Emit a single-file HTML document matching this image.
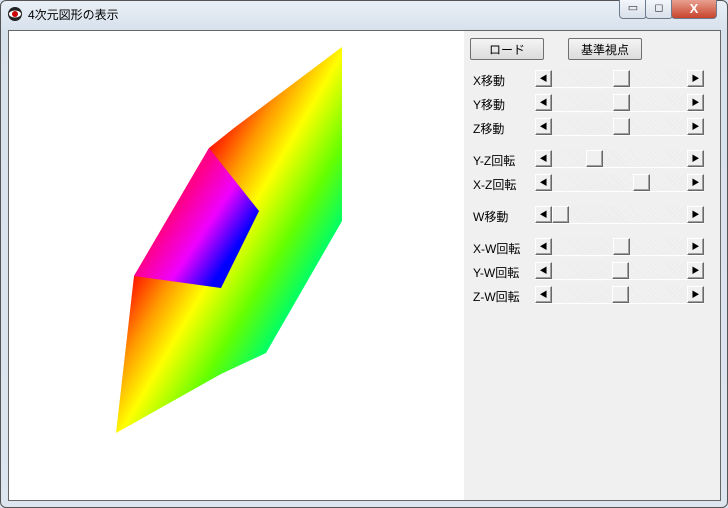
<!DOCTYPE html><html><head><meta charset="utf-8"><style>
body{margin:0;width:728px;height:508px;overflow:hidden;background:#dbe4ef;font-family:"Liberation Sans","Noto Sans CJK JP",sans-serif;position:relative}
.frame{position:absolute;left:0;top:0;width:726px;height:506px;border:1px solid #555;border-radius:6px;background:linear-gradient(#e9eff6,#d7e1ec 30px,#dde5ef)}
.title{position:absolute;left:28px;top:6px;font-size:12px;color:#000}
.client{position:absolute;left:8px;top:30px;width:711px;height:469px;border:1px solid #666;background:#f0f0f0}
.canvas{position:absolute;left:0;top:0;width:455px;height:469px;background:#fff}
.btn{position:absolute;top:7px;height:22px;width:74px;border:1px solid #707070;background:linear-gradient(#f4f4f4,#dcdcdc);font-size:12px;text-align:center;line-height:22px;box-sizing:border-box;border-radius:2px}
.lbl{position:absolute;left:464px;font-size:12px}
.sb{position:absolute;left:526px;width:169px;height:17px;background:repeating-linear-gradient(45deg,#f5f5f5 0 1px,#e9e9e9 1px 2px);border-bottom:1px solid #fff}
.sb .a,.sb .t{position:absolute;top:0;width:15px;height:15px;background:#f0f0f0;border:1px solid;border-color:#fff #696969 #696969 #fff;box-shadow:inset -1px -1px #a0a0a0}
.sb .a{font-size:8px;line-height:15px;text-align:center}
.wb{position:absolute;top:0;height:18px;border:1px solid #6b7a8e;border-top:none;border-radius:0 0 4px 4px;background:linear-gradient(#f3f6fa,#d8e0ea);font-size:11px;text-align:center;line-height:17px;color:#333}
</style></head><body>
<div class="frame"></div>
<svg style="position:absolute;left:7px;top:6px" width="16" height="16"><circle cx="8" cy="8" r="7" fill="#222"/><ellipse cx="8" cy="8" rx="6" ry="3.5" fill="#fff"/><circle cx="8" cy="8" r="3" fill="#c00"/></svg>
<div class="title">4次元図形の表示</div>
<div class="wb" style="left:619px;width:26px">▭</div>
<div class="wb" style="left:645px;width:26px">◻</div>
<div class="wb" style="left:671px;width:44px;background:linear-gradient(#e8a090,#c8442c);color:#fff;font-weight:bold;font-size:13px">X</div>
<div class="client">
<div class="canvas"><svg width="455" height="469" style="position:absolute;left:-8px;top:-30px">
<defs>
<linearGradient id="g" x1="168" y1="204" x2="305" y2="284" gradientUnits="userSpaceOnUse"><stop offset="0" stop-color="#f00"/><stop offset=".25" stop-color="#f90"/><stop offset=".46" stop-color="#ff0"/><stop offset=".75" stop-color="#6f0"/><stop offset="1" stop-color="#0f6"/></linearGradient>
<linearGradient id="g4" x1="180" y1="200" x2="240" y2="240" gradientUnits="userSpaceOnUse"><stop offset="0" stop-color="#f08"/><stop offset=".5" stop-color="#e0f"/><stop offset="1" stop-color="#00f"/></linearGradient>
<pattern id="dots" width="4" height="4" patternUnits="userSpaceOnUse"><rect width="1" height="1" fill="#fff" opacity=".5"/></pattern>
</defs>
<polygon points="341,46 341,220 265,352 220,373 115,432 133,275 208,147 233,127" fill="url(#g)"/>
<polygon points="208,147 258,210 220,287 133,275" fill="url(#g4)"/>
</svg></div>
<div class="btn" style="left:461px">ロード</div>
<div class="btn" style="left:559px">基準視点</div>
<div class="lbl" style="top:41px">X移動</div><div class="sb" style="top:39px"><div class="a" style="left:0">◀</div><div class="t" style="left:78px"></div><div class="a" style="right:0">▶</div></div>
<div class="lbl" style="top:65px">Y移動</div><div class="sb" style="top:63px"><div class="a" style="left:0">◀</div><div class="t" style="left:78px"></div><div class="a" style="right:0">▶</div></div>
<div class="lbl" style="top:89px">Z移動</div><div class="sb" style="top:87px"><div class="a" style="left:0">◀</div><div class="t" style="left:78px"></div><div class="a" style="right:0">▶</div></div>
<div class="lbl" style="top:121px">Y-Z回転</div><div class="sb" style="top:119px"><div class="a" style="left:0">◀</div><div class="t" style="left:51px"></div><div class="a" style="right:0">▶</div></div>
<div class="lbl" style="top:145px">X-Z回転</div><div class="sb" style="top:143px"><div class="a" style="left:0">◀</div><div class="t" style="left:98px"></div><div class="a" style="right:0">▶</div></div>
<div class="lbl" style="top:177px">W移動</div><div class="sb" style="top:175px"><div class="a" style="left:0">◀</div><div class="t" style="left:17px"></div><div class="a" style="right:0">▶</div></div>
<div class="lbl" style="top:209px">X-W回転</div><div class="sb" style="top:207px"><div class="a" style="left:0">◀</div><div class="t" style="left:78px"></div><div class="a" style="right:0">▶</div></div>
<div class="lbl" style="top:233px">Y-W回転</div><div class="sb" style="top:231px"><div class="a" style="left:0">◀</div><div class="t" style="left:77px"></div><div class="a" style="right:0">▶</div></div>
<div class="lbl" style="top:257px">Z-W回転</div><div class="sb" style="top:255px"><div class="a" style="left:0">◀</div><div class="t" style="left:77px"></div><div class="a" style="right:0">▶</div></div>
</div>
</body></html>
